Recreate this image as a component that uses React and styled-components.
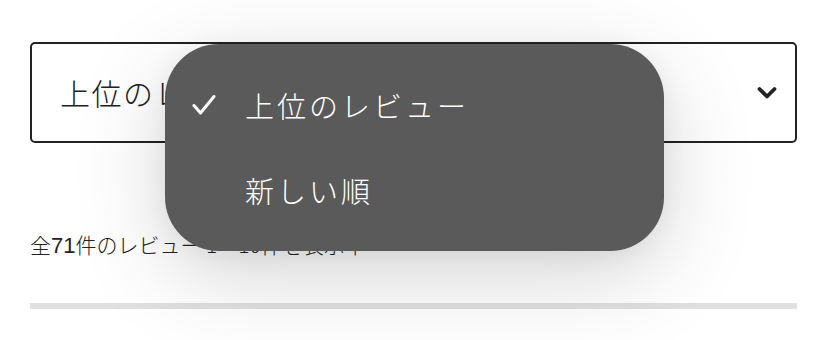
import React from 'react';
import styled, { createGlobalStyle } from 'styled-components';

const GlobalStyle = createGlobalStyle`
  html, body {
    margin: 0;
    padding: 0;
    background: #fff;
  }
  body {
    font-family: "Noto Sans CJK JP", "Noto Sans", sans-serif;
    color: #222;
  }
`;

const Page = styled.div`
  position: relative;
  width: 827px;
  height: 340px;
  overflow: hidden;
  box-sizing: border-box;
  padding: 42px 30px 0;
`;

const SelectBox = styled.div`
  height: 101px;
  box-sizing: border-box;
  border: 2px solid #222;
  border-radius: 5px;
  display: flex;
  align-items: center;
  justify-content: space-between;
  padding: 0 18px 0 28px;
  font-size: 30px;
  font-weight: 300;
  letter-spacing: 1.5px;
  color: #222;
`;

const SelectLabel = styled.span`
  line-height: 1;
  margin-top: -2px;
`;

const Summary = styled.p`
  margin: 86px 0 0;
  font-size: 21px;
  font-weight: 300;
  line-height: 30px;
  color: #222;
  span { font-family: "Liberation Sans", sans-serif; font-size: 22px; font-weight: 400; }
`;

const Divider = styled.div`
  margin-top: 42px;
  height: 6px;
  background: #e0e0e0;
`;

const Menu = styled.ul`
  position: absolute;
  left: 165px;
  top: 44px;
  width: 499px;
  height: 207px;
  box-sizing: border-box;
  margin: 0;
  padding: 18px 0 18px 27px;
  list-style: none;
  background: #5a5a5a;
  border-radius: 54px;
  box-shadow: 0 24px 90px rgba(0, 0, 0, 0.17), 0 4px 24px rgba(0, 0, 0, 0.06);
  display: flex;
  flex-direction: column;
`;

const MenuItem = styled.li`
  height: 85px;
  display: flex;
  align-items: center;
  color: #fff;
  font-size: 29px;
  font-weight: 300;
  letter-spacing: 3px;
`;

const CheckSlot = styled.span`
  width: 53px;
  flex-shrink: 0;
  display: flex;
  align-items: center;
`;

const Check = () => (
  <svg width="24" height="22" viewBox="0 0 24 22" fill="none">
    <path d="M2 11.5 L8.5 19 L22 2.5" stroke="#fff" strokeWidth="3" strokeLinecap="round" strokeLinejoin="round" />
  </svg>
);

const Chevron = () => (
  <svg width="20" height="14" viewBox="0 0 20 14" fill="none">
    <path d="M2.5 3 L10 10.5 L17.5 3" stroke="#222" strokeWidth="3.8" strokeLinecap="round" strokeLinejoin="round" />
  </svg>
);

const options = [
  { id: 'top', label: '上位のレビュー', selected: true },
  { id: 'new', label: '新しい順', selected: false },
];

export default function App() {
  return (
    <>
      <GlobalStyle />
      <Page>
        <SelectBox>
          <SelectLabel>上位のレビュー</SelectLabel>
          <Chevron />
        </SelectBox>
        <Summary>全<span>71</span>件のレビュー 1〜10件を表示中</Summary>
        <Divider />
        <Menu>
          {options.map((o) => (
            <MenuItem key={o.id}>
              <CheckSlot>{o.selected && <Check />}</CheckSlot>
              {o.label}
            </MenuItem>
          ))}
        </Menu>
      </Page>
    </>
  );
}
